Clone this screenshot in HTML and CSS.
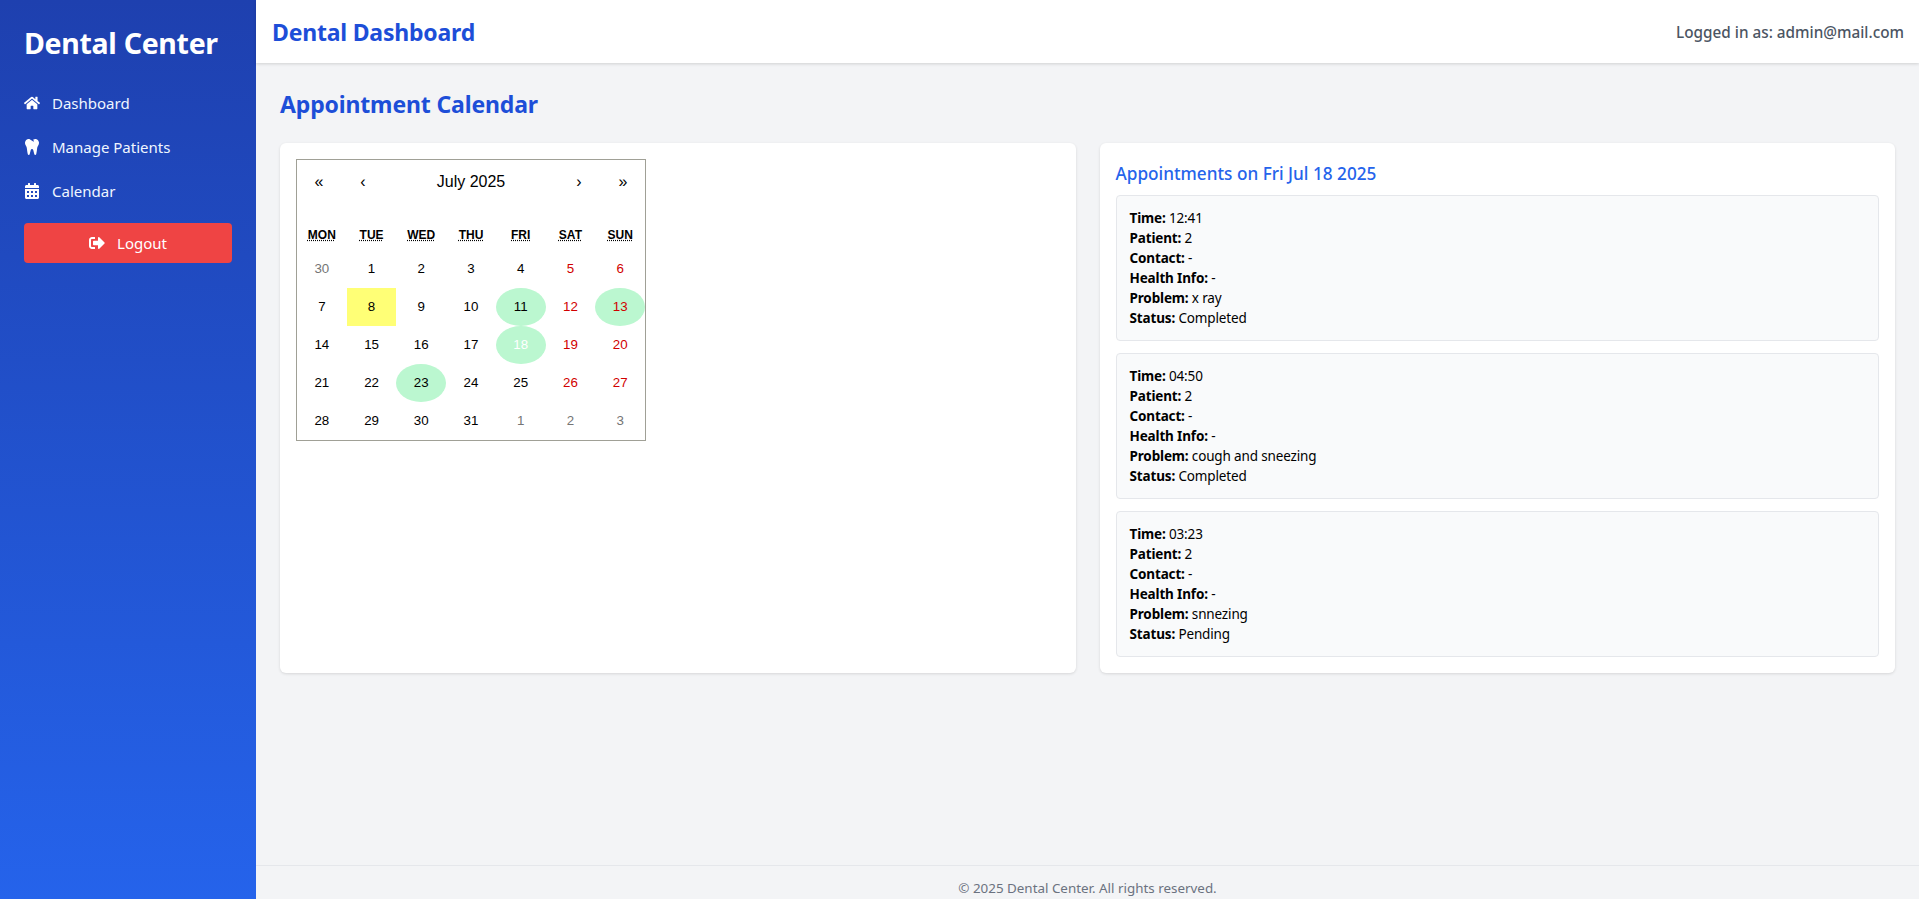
FILE: index.html
```html
<!DOCTYPE html>
<html lang="en">
<head>
    <meta charset="UTF-8">
    <meta name="viewport" content="width=device-width, initial-scale=1.0">
    <title>Dental Center</title>
    <link rel="stylesheet" href="styles.css">
</head>
<body>
    <div class="layout">
        <aside class="sidebar">
            <h1 class="brand">Dental Center</h1>
            <nav class="side-nav">
                <a class="nav-link" href="#">
                    <svg class="nav-icon" viewBox="0 0 576 512"><path d="M280.37 148.26L96 300.11V464a16 16 0 0 0 16 16l112.06-.29a16 16 0 0 0 15.92-16V368a16 16 0 0 1 16-16h64a16 16 0 0 1 16 16v95.64a16 16 0 0 0 16 16.05L464 480a16 16 0 0 0 16-16V300L295.67 148.26a12.19 12.19 0 0 0-15.3 0zM571.6 251.47L488 182.56V44.05a12 12 0 0 0-12-12h-56a12 12 0 0 0-12 12v72.61L318.47 43a48 48 0 0 0-61 0L4.34 251.47a12 12 0 0 0-1.6 16.9l25.5 31A12 12 0 0 0 45.15 301l235.22-193.74a12.19 12.19 0 0 1 15.3 0L530.9 301a12 12 0 0 0 16.9-1.6l25.5-31a12 12 0 0 0-1.7-16.93z"/></svg>
                    Dashboard
                </a>
                <a class="nav-link" href="#">
                    <svg class="nav-icon" viewBox="0 0 448 512"><path d="M443.98 96.25c-11.01-45.22-47.11-82.06-92.01-93.72-32.19-8.36-63 5.1-89.14 24.33-3.25 2.39-6.96 3.73-10.5 5.48l28.32 18.21c7.42 4.77 9.58 14.67 4.8 22.11-4.46 6.95-14.27 9.86-22.11 4.8L162.83 12.84c-20.7-10.85-43.38-16.4-66.81-10.31-44.9 11.67-81 48.5-92.01 93.72-10.13 41.62-.42 80.81 21.5 110.43 23.36 31.57 32.68 68.66 36.29 107.35 4.4 47.16 10.33 94.16 20.94 140.32l7.8 33.95c3.19 13.87 15.49 23.7 29.67 23.7 13.97 0 26.15-9.55 29.54-23.16l34.47-138.42c4.56-18.32 20.96-31.16 39.76-31.16s35.2 12.85 39.76 31.16l34.47 138.42c3.39 13.61 15.57 23.16 29.54 23.16 14.18 0 26.48-9.83 29.67-23.7l7.8-33.95c10.61-46.15 16.53-93.16 20.94-140.32 3.61-38.7 12.93-75.78 36.29-107.35 21.95-29.61 31.66-68.8 21.53-110.43z"/></svg>
                    Manage Patients
                </a>
                <a class="nav-link" href="#">
                    <svg class="nav-icon" viewBox="0 0 448 512"><path d="M0 464c0 26.5 21.5 48 48 48h352c26.5 0 48-21.5 48-48V192H0v272zm320-196c0-6.6 5.4-12 12-12h40c6.6 0 12 5.4 12 12v40c0 6.6-5.4 12-12 12h-40c-6.6 0-12-5.4-12-12v-40zm0 128c0-6.6 5.4-12 12-12h40c6.6 0 12 5.4 12 12v40c0 6.6-5.4 12-12 12h-40c-6.6 0-12-5.4-12-12v-40zM192 268c0-6.6 5.4-12 12-12h40c6.6 0 12 5.4 12 12v40c0 6.6-5.4 12-12 12h-40c-6.6 0-12-5.4-12-12v-40zm0 128c0-6.6 5.4-12 12-12h40c6.6 0 12 5.4 12 12v40c0 6.6-5.4 12-12 12h-40c-6.6 0-12-5.4-12-12v-40zM64 268c0-6.6 5.4-12 12-12h40c6.6 0 12 5.4 12 12v40c0 6.6-5.4 12-12 12H76c-6.6 0-12-5.4-12-12v-40zm0 128c0-6.6 5.4-12 12-12h40c6.6 0 12 5.4 12 12v40c0 6.6-5.4 12-12 12H76c-6.6 0-12-5.4-12-12v-40zM400 64h-48V16c0-8.8-7.2-16-16-16h-32c-8.8 0-16 7.2-16 16v48H160V16c0-8.8-7.2-16-16-16h-32c-8.8 0-16 7.2-16 16v48H48C21.5 64 0 85.5 0 112v48h448v-48c0-26.5-21.5-48-48-48z"/></svg>
                    Calendar
                </a>
            </nav>
            <button class="logout-btn" type="button">
                <svg class="logout-icon" viewBox="0 0 512 512"><path d="M497 273L329 441c-15 15-41 4.5-41-17v-96H152c-13.3 0-24-10.7-24-24v-96c0-13.3 10.7-24 24-24h136V88c0-21.4 25.9-32 41-17l168 168c9.3 9.4 9.3 24.6 0 34zM192 436v-40c0-6.6-5.4-12-12-12H96c-17.7 0-32-14.3-32-32V160c0-17.7 14.3-32 32-32h84c6.6 0 12-5.4 12-12V76c0-6.6-5.4-12-12-12H96c-53 0-96 43-96 96v192c0 53 43 96 96 96h84c6.6 0 12-5.4 12-12z"/></svg>
                Logout
            </button>
        </aside>

        <div class="content">
            <header class="topbar">
                <h2 class="topbar-title">Dental Dashboard</h2>
                <span class="topbar-user">Logged in as: admin@mail.com</span>
            </header>

            <main class="main">
                <h2 class="page-title">Appointment Calendar</h2>
                <div class="panels">
                    <section class="card">
                        <div class="calendar">
                            <div class="cal-nav">
                                <button class="cal-arrow" type="button">«</button>
                                <button class="cal-arrow" type="button">‹</button>
                                <button class="cal-label" type="button">July 2025</button>
                                <button class="cal-arrow" type="button">›</button>
                                <button class="cal-arrow" type="button">»</button>
                            </div>
                            <div class="cal-weekdays">
                                <abbr>Mon</abbr><abbr>Tue</abbr><abbr>Wed</abbr><abbr>Thu</abbr><abbr>Fri</abbr><abbr>Sat</abbr><abbr>Sun</abbr>
                            </div>
                            <div class="cal-days">
                                <button class="tile muted">30</button>
                                <button class="tile">1</button>
                                <button class="tile">2</button>
                                <button class="tile">3</button>
                                <button class="tile">4</button>
                                <button class="tile weekend">5</button>
                                <button class="tile weekend">6</button>

                                <button class="tile">7</button>
                                <button class="tile today">8</button>
                                <button class="tile">9</button>
                                <button class="tile">10</button>
                                <button class="tile booked">11</button>
                                <button class="tile weekend">12</button>
                                <button class="tile weekend booked">13</button>

                                <button class="tile">14</button>
                                <button class="tile">15</button>
                                <button class="tile">16</button>
                                <button class="tile">17</button>
                                <button class="tile booked active">18</button>
                                <button class="tile weekend">19</button>
                                <button class="tile weekend">20</button>

                                <button class="tile">21</button>
                                <button class="tile">22</button>
                                <button class="tile booked">23</button>
                                <button class="tile">24</button>
                                <button class="tile">25</button>
                                <button class="tile weekend">26</button>
                                <button class="tile weekend">27</button>

                                <button class="tile">28</button>
                                <button class="tile">29</button>
                                <button class="tile">30</button>
                                <button class="tile">31</button>
                                <button class="tile muted">1</button>
                                <button class="tile muted">2</button>
                                <button class="tile muted">3</button>
                            </div>
                        </div>
                    </section>

                    <section class="card">
                        <h3 class="list-title">Appointments on Fri Jul 18 2025</h3>
                        <div class="appt">
                            <p><strong>Time:</strong> 12:41</p>
                            <p><strong>Patient:</strong> 2</p>
                            <p><strong>Contact:</strong> -</p>
                            <p><strong>Health Info:</strong> -</p>
                            <p><strong>Problem:</strong> x ray</p>
                            <p><strong>Status:</strong> Completed</p>
                        </div>
                        <div class="appt">
                            <p><strong>Time:</strong> 04:50</p>
                            <p><strong>Patient:</strong> 2</p>
                            <p><strong>Contact:</strong> -</p>
                            <p><strong>Health Info:</strong> -</p>
                            <p><strong>Problem:</strong> cough and sneezing</p>
                            <p><strong>Status:</strong> Completed</p>
                        </div>
                        <div class="appt">
                            <p><strong>Time:</strong> 03:23</p>
                            <p><strong>Patient:</strong> 2</p>
                            <p><strong>Contact:</strong> -</p>
                            <p><strong>Health Info:</strong> -</p>
                            <p><strong>Problem:</strong> snnezing</p>
                            <p><strong>Status:</strong> Pending</p>
                        </div>
                    </section>
                </div>
            </main>

            <footer class="footer">© 2025 Dental Center. All rights reserved.</footer>
        </div>
    </div>
</body>
</html>
```

FILE: styles.css
```css
* {
    box-sizing: border-box;
}

html, body {
    height: 100%;
}

body {
    margin: 0;
    font-family: "Noto Sans", "Open Sans", sans-serif;
    background-color: #f3f4f6;
    color: #000;
    overflow: hidden;
}

.layout {
    display: flex;
    height: 100vh;
}

/* sidebar */
.sidebar {
    width: 256px;
    flex-shrink: 0;
    padding: 25px 24px 24px;
    background: linear-gradient(to bottom, #1e40af, #2563eb);
    color: white;
}

.brand {
    margin: 0 0 28px 0;
    font-size: 28.5px;
    line-height: 36px;
    font-weight: 700;
    letter-spacing: -0.3px;
    white-space: nowrap;
}

.side-nav {
    display: flex;
    flex-direction: column;
    gap: 16px;
    margin-bottom: 18px;
}

.nav-link {
    display: flex;
    align-items: center;
    gap: 12px;
    height: 28px;
    color: #eff6ff;
    font-size: 15px;
    text-decoration: none;
}

.nav-icon {
    width: 16px;
    height: 16px;
    fill: white;
}

.logout-btn {
    display: flex;
    align-items: center;
    justify-content: center;
    gap: 12px;
    width: 100%;
    height: 40px;
    padding: 0;
    border: none;
    border-radius: 4px;
    background-color: #ef4444;
    color: white;
    font-family: inherit;
    font-size: 15px;
    cursor: pointer;
}

.logout-icon {
    width: 16px;
    height: 16px;
    fill: white;
}

/* right side */
.content {
    flex: 1;
    min-width: 0;
    display: flex;
    flex-direction: column;
}

.topbar {
    display: flex;
    justify-content: space-between;
    align-items: center;
    flex-shrink: 0;
    height: 63px;
    padding: 0 15px 0 16px;
    background-color: white;
    box-shadow: 0 1px 3px rgba(0, 0, 0, 0.15);
}

.topbar-title {
    margin: 0;
    font-size: 23px;
    font-weight: 700;
    letter-spacing: -0.2px;
    color: #1d4ed8;
}

.topbar-user {
    font-size: 15.3px;
    font-weight: 500;
    color: #4b5563;
}

.main {
    flex: 1;
    padding: 25px 24px 24px;
}

.page-title {
    margin: 0 0 23px 0;
    font-size: 23px;
    line-height: 32px;
    font-weight: 700;
    letter-spacing: -0.15px;
    color: #1d4ed8;
}

.panels {
    display: grid;
    grid-template-columns: 1fr 1fr;
    gap: 24px;
}

.card {
    padding: 16px;
    background-color: white;
    border-radius: 6px;
    box-shadow: 0 1px 3px rgba(0, 0, 0, 0.12);
}

/* calendar */
.calendar {
    width: 350px;
    border: 1px solid #a0a096;
    font-family: "Liberation Sans", Arial, sans-serif;
    background-color: white;
}

.calendar button {
    border: none;
    background: none;
    padding: 0;
    font-family: inherit;
    color: #000;
}

.cal-nav {
    display: flex;
    height: 44px;
    margin-bottom: 16px;
}

.calendar .cal-arrow {
    width: 44px;
    font-size: 16px;
}

.calendar .cal-label {
    flex: 1;
    font-size: 16px;
}

.cal-weekdays {
    display: grid;
    grid-template-columns: repeat(7, 1fr);
    height: 30px;
    align-items: center;
    text-align: center;
    font-size: 12px;
    font-weight: 700;
    text-transform: uppercase;
}

.cal-weekdays abbr {
    text-decoration: underline dotted;
}

.cal-days {
    display: grid;
    grid-template-columns: repeat(7, 1fr);
    grid-auto-rows: 38px;
}

.calendar .tile {
    font-size: 13.33px;
    padding-bottom: 2px;
}

.calendar .weekend {
    color: #d10000;
}

.calendar .muted {
    color: #757575;
}

.calendar .today {
    background-color: #ffff76;
}

.calendar .booked {
    background-color: #bbf7d0;
    border-radius: 50%;
}

.calendar .active {
    color: white;
}

/* appointments */
.list-title {
    margin: 0 0 8px 0;
    padding-top: 1px;
    height: 28px;
    font-size: 17.2px;
    line-height: 28px;
    font-weight: 500;
    color: #2563eb;
}

.appt {
    padding: 12px 12px 12px 13px;
    margin-bottom: 12px;
    background-color: #f9fafb;
    border: 1px solid #e5e7eb;
    border-radius: 4px;
    font-size: 13.5px;
    line-height: 20px;
    letter-spacing: -0.15px;
}

.appt:last-child {
    margin-bottom: 0;
}

.appt p {
    margin: 0;
}

.footer {
    flex-shrink: 0;
    height: 34px;
    padding-top: 12px;
    border-top: 1px solid #e5e7eb;
    text-align: center;
    font-size: 13.4px;
    line-height: 20px;
    color: #6b7280;
}
```
